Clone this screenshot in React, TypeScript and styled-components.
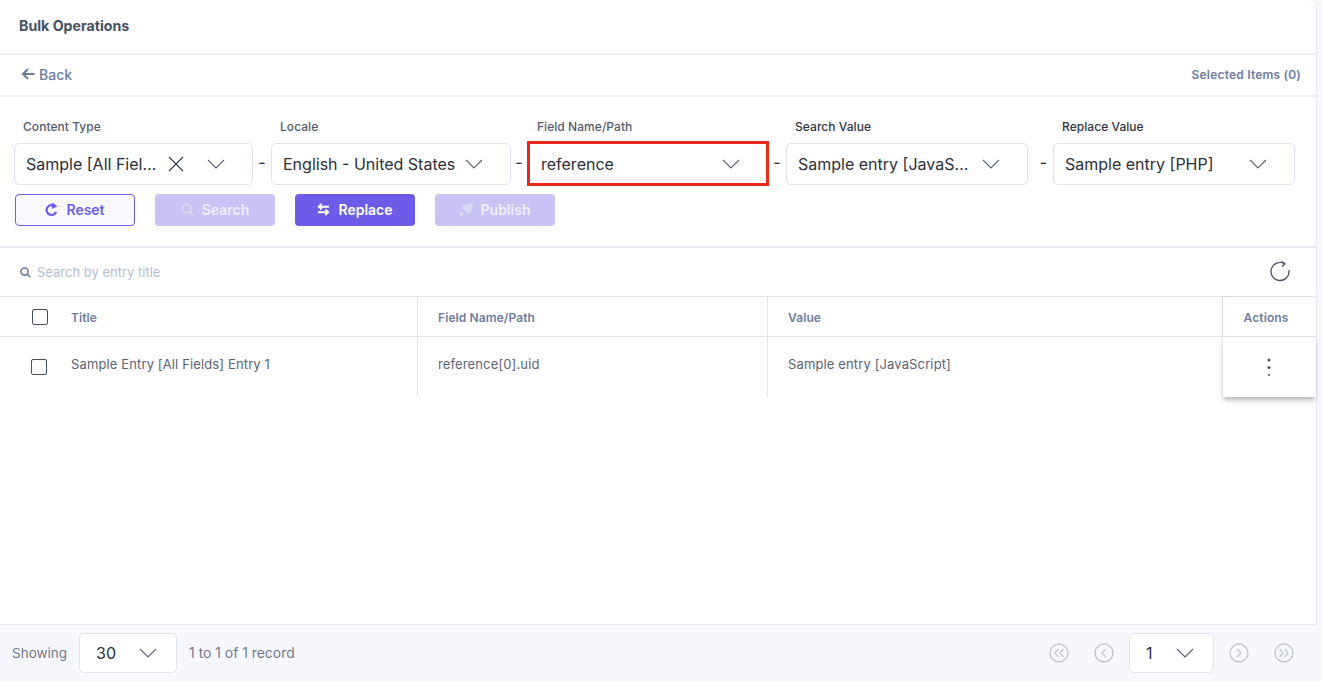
import React from "react";
import styled, { createGlobalStyle } from "styled-components";

const Global = createGlobalStyle`
  html, body { margin: 0; padding: 0; height: 100%; background: #f7f8fd; }
  body { font-family: Inter, "Liberation Sans", sans-serif; overflow: hidden; }
  * { box-sizing: border-box; }
`;

const Page = styled.div`
  width: 1322px;
  height: 681px;
  display: flex;
  flex-direction: column;
  background: #f7f8fd;
`;

const Panel = styled.main`
  width: 1317px;
  height: 624px;
  flex: none;
  background: #fff;
  border-right: 1px solid #e6e9f3;
  border-top-right-radius: 8px;
  display: flex;
  flex-direction: column;
`;

const Header = styled.header`
  height: 55px;
  flex: none;
  display: flex;
  align-items: center;
  padding: 0 19px 2px;
  border-bottom: 2px solid #edeff7;
`;

const Title = styled.h1`
  margin: 0;
  font-size: 14.2px;
  font-weight: 700;
  color: #475161;
`;

const BackBar = styled.div`
  height: 42px;
  flex: none;
  display: flex;
  align-items: center;
  justify-content: space-between;
  padding: 0 15px 2px 21px;
  border-bottom: 2px solid #edeff7;
`;

const BackLink = styled.a`
  display: flex;
  align-items: center;
  gap: 4px;
  font-size: 14px;
  font-weight: 500;
  color: #6c7c9f;
`;

const Selected = styled.span`
  font-size: 12px;
  font-weight: 600;
  letter-spacing: 0.2px;
  color: #6c7c9f;
`;

const Filters = styled.section`
  height: 151px;
  flex: none;
  padding: 23px 0 0 14px;
  border-bottom: 2px solid #e8ebf4;
`;

const FieldRow = styled.div`
  display: flex;
  align-items: flex-end;
`;

const Field = styled.div<{ $w: number; $labelLeft: number }>`
  width: ${(p) => p.$w}px;
  flex: none;
  position: relative;
  & > label {
    padding-left: ${(p) => p.$labelLeft}px;
  }
`;

const Label = styled.label<{ $dark?: boolean }>`
  display: block;
  height: 23px;
  line-height: 14px;
  font-size: 12px;
  font-weight: 500;
  letter-spacing: 0.05px;
  color: ${(p) => (p.$dark ? "#2f3542" : "#535b6b")};
`;

const SelectBox = styled.div<{ $h?: number; $pr?: number; $pl?: number; $w?: number }>`
  height: ${(p) => p.$h ?? 42}px;
  ${(p) => (p.$w ? `width: ${p.$w}px; flex: none;` : "")}
  display: flex;
  align-items: center;
  padding: 0 ${(p) => p.$pr ?? 27}px 0 ${(p) => p.$pl ?? 11}px;
  background: #fff;
  border: 1px solid #dfe3f0;
  border-radius: 5px;
  color: #2b2f38;
  font-size: 16px;
`;

const SelectValue = styled.span<{ $max?: number }>`
  flex: 0 1 auto;
  min-width: 0;
  ${(p) => (p.$max ? `max-width: ${p.$max}px;` : "")}
  white-space: nowrap;
  overflow: hidden;
  text-overflow: ellipsis;
`;

const ClearIcon = styled.svg`
  flex: none;
  width: 18px;
  height: 18px;
  margin-left: 10px;
`;

const Chevron = styled.svg`
  flex: none;
  width: 18px;
  height: 10px;
  margin-left: auto;
`;

const Dash = styled.span<{ $w: number; $shift?: number }>`
  width: ${(p) => p.$w}px;
  flex: none;
  height: 42px;
  padding-left: ${(p) => p.$shift ?? 0}px;
  line-height: 38px;
  text-align: center;
  font-size: 16px;
  color: #2b2f38;
`;

const Highlight = styled.div`
  position: absolute;
  left: 0;
  right: -1px;
  top: 21px;
  height: 45px;
  border: 3px solid #e8291e;
  pointer-events: none;
`;

const ButtonRow = styled.div`
  display: flex;
  gap: 20px;
  margin: 9px 0 0 1px;
`;

const Button = styled.button<{ $variant: "outline" | "solid" | "muted" }>`
  width: 120px;
  height: 32px;
  display: flex;
  align-items: center;
  justify-content: center;
  gap: 8px;
  padding: 0 0 1px;
  font: 600 14px Inter, "Liberation Sans", sans-serif;
  border-radius: 4px;
  border: 1px solid ${(p) => (p.$variant === "outline" ? "#6c5ce7" : "transparent")};
  background: ${(p) =>
    p.$variant === "outline" ? "#f9f8ff" : p.$variant === "solid" ? "#6c5ce7" : "#c9c2f4"};
  color: ${(p) => (p.$variant === "outline" ? "#6c5ce7" : p.$variant === "solid" ? "#fff" : "#f1effd")};
`;

const SearchBar = styled.div`
  height: 49px;
  flex: none;
  display: flex;
  align-items: center;
  justify-content: space-between;
  padding: 0 26px 0 20px;
  border-bottom: 1px solid #e0e4ef;
`;

const SearchField = styled.div`
  display: flex;
  align-items: center;
  gap: 6px;
  font-size: 13px;
  color: #b3bcd1;
`;

const Grid = styled.div`
  display: grid;
  grid-template-columns: 418px 350px 455px 93px;
`;

const HeadCell = styled.div<{ $last?: boolean }>`
  height: 40px;
  display: flex;
  align-items: center;
  padding: 1px 0 0 20px;
  font-size: 12px;
  font-weight: 600;
  letter-spacing: 0.1px;
  color: #6c7c9f;
  border-bottom: 1px solid #e0e4ef;
  border-right: ${(p) => (p.$last ? "none" : "1px solid #e0e4ef")};
`;

const BodyCell = styled.div<{ $last?: boolean }>`
  height: 60px;
  padding: 19px 0 0 20px;
  font-size: 13px;
  line-height: 16px;
  letter-spacing: 0.13px;
  color: #5c6473;
  border-right: ${(p) => (p.$last ? "none" : "1px solid #e0e4ef")};
`;

const TitleHead = styled(HeadCell)`
  padding-left: 32px;
  gap: 23px;
`;

const TitleBody = styled(BodyCell)`
  display: flex;
  align-items: flex-start;
  padding-left: 31px;
  gap: 24px;
`;

const Check = styled.span<{ $top?: number }>`
  width: 16px;
  height: 16px;
  flex: none;
  margin-top: ${(p) => p.$top ?? 0}px;
  border: 1.3px solid #475161;
  border-radius: 2px;
  background: #fff;
`;

const ActionsHead = styled(HeadCell)`
  justify-content: center;
  padding: 1px 7px 0 0;
  box-shadow: -1px 0 2px rgba(110, 120, 140, 0.14);
  position: relative;
`;

const ActionsBody = styled(BodyCell)`
  display: flex;
  align-items: flex-start;
  justify-content: center;
  padding: 21px 1px 0 0;
  box-shadow: 0 4px 5px -1px rgba(80, 82, 92, 0.42), -1px 0 2px rgba(110, 120, 140, 0.08);
  position: relative;
`;

const Footer = styled.footer`
  height: 57px;
  flex: none;
  display: flex;
  align-items: center;
  justify-content: space-between;
  padding: 0 22px 0 12px;
  border-top: 1px solid #e2e5f0;
  width: 1316px;
`;

const FooterGroup = styled.div`
  display: flex;
  align-items: center;
  font-size: 14px;
  color: #73788a;
`;

const ShowingLabel = styled.span`
  margin: 0 12px 1px 0;
  font-size: 13.5px;
`;

const RecordCount = styled.span`
  margin: 0 0 1px 12px;
  font-size: 13.9px;
`;

const PagerIcon = styled.svg<{ $left?: number; $right?: number }>`
  flex: none;
  width: 20px;
  height: 20px;
  margin-left: ${(p) => p.$left ?? 0}px;
  margin-right: ${(p) => p.$right ?? 0}px;
`;

const ChevronDown = () => (
  <Chevron viewBox="0 0 18 10" fill="none" stroke="#5f6676" strokeWidth="1.2">
    <path d="M1 1l8 8 8-8" />
  </Chevron>
);

const Select = ({ value, clear, max, pl }: { value: string; clear?: boolean; max?: number; pl?: number }) => (
  <SelectBox $pl={pl}>
    <SelectValue $max={max}>{value}</SelectValue>
    {clear && (
      <ClearIcon viewBox="0 0 18 18" fill="none" stroke="#3d424d" strokeWidth="1.3">
        <path d="M2 2l14 14M16 2L2 16" />
      </ClearIcon>
    )}
    <ChevronDown />
  </SelectBox>
);

const Pager = ({ d, left, right }: { d: string; left?: number; right?: number }) => (
  <PagerIcon viewBox="0 0 20 20" fill="none" stroke="#c3c6d0" strokeWidth="1.4" $left={left} $right={right}>
    <circle cx="10" cy="10" r="9" />
    <path d={d} strokeLinecap="round" strokeLinejoin="round" />
  </PagerIcon>
);

export default function App() {
  return (
    <Page>
      <Global />
      <Panel>
        <Header>
          <Title>Bulk Operations</Title>
        </Header>
        <BackBar>
          <BackLink>
            <svg width="14" height="14" viewBox="0 0 14 14" fill="none" stroke="#6c7c9f" strokeWidth="2">
              <path d="M13.5 7H2M7 2L2 7l5 5" />
            </svg>
            Back
          </BackLink>
          <Selected>Selected Items (0)</Selected>
        </BackBar>
        <Filters>
          <FieldRow>
            <Field $w={239} $labelLeft={9}>
              <Label>Content Type</Label>
              <Select value="Sample [All Fields] Entry" clear max={131} />
            </Field>
            <Dash $w={18}>-</Dash>
            <Field $w={240} $labelLeft={9}>
              <Label>Locale</Label>
              <Select value="English - United States" />
            </Field>
            <Dash $w={16}>-</Dash>
            <Field $w={241} $labelLeft={10}>
              <Label>Field Name/Path</Label>
              <Select value="reference" pl={13} />
              <Highlight />
            </Field>
            <Dash $w={18}>-</Dash>
            <Field $w={242} $labelLeft={9}>
              <Label $dark>Search Value</Label>
              <Select value="Sample entry [JavaScript]" max={172} />
            </Field>
            <Dash $w={25} $shift={6}>-</Dash>
            <Field $w={242} $labelLeft={9}>
              <Label $dark>Replace Value</Label>
              <Select value="Sample entry [PHP]" />
            </Field>
          </FieldRow>
          <ButtonRow>
            <Button $variant="outline">
              <svg width="13" height="13" viewBox="0 0 14 14" fill="none" stroke="#6c5ce7" strokeWidth="2.4">
                <path d="M12 9.500A5.300 5.300 0 1 1 7.500 2.300" />
                <path d="M7.500 -0.500L13.500 3.500 7.500 6.500z" fill="#6c5ce7" stroke="none" />
              </svg>
              Reset
            </Button>
            <Button $variant="muted">
              <svg width="13" height="13" viewBox="0 0 14 14" fill="none" stroke="#dcdbf0" strokeWidth="1.8">
                <circle cx="6" cy="6" r="4.600" />
                <path d="M9.500 9.500L13 13" />
              </svg>
              Search
            </Button>
            <Button $variant="solid">
              <svg width="13" height="13" viewBox="0 0 14 14" fill="none" stroke="#fff" strokeWidth="2">
                <path d="M13 4H2M5 1L2 4l3 3M1 10h11M9 7l3 3-3 3" />
              </svg>
              Replace
            </Button>
            <Button $variant="muted">
              <svg width="13" height="13" viewBox="0 0 14 14" fill="#d9dcf0">
                <path d="M13.800.2C10 .2 6 1 4 3L1.500 5.500l2 1 4 4 1 2L11 10c2-2 2.800-6 2.800-9.800z" />
                <path d="M0 10h3v4H0z" />
              </svg>
              Publish
            </Button>
          </ButtonRow>
        </Filters>
        <SearchBar>
          <SearchField>
            <svg width="11" height="11" viewBox="0 0 12 12" fill="none" stroke="#6c7c9f" strokeWidth="1.8">
              <circle cx="5" cy="5" r="3.900" />
              <path d="M8 8l3.200 3.200" />
            </svg>
            Search by entry title
          </SearchField>
          <svg width="20" height="22" viewBox="0 -2 20 22" fill="none" stroke="#4a5160" strokeWidth="1.300">
            <path d="M18.900 7A9 9 0 1 1 14.500 .7" />
            <path d="M11.700 -1.500L15 .8 12 3.500" />
          </svg>
        </SearchBar>
        <Grid>
          <TitleHead>
            <Check />
            Title
          </TitleHead>
          <HeadCell>Field Name/Path</HeadCell>
          <HeadCell>Value</HeadCell>
          <ActionsHead $last>Actions</ActionsHead>
          <TitleBody>
            <Check $top={3} />
            <span>Sample Entry [All Fields] Entry 1</span>
          </TitleBody>
          <BodyCell>reference[0].uid</BodyCell>
          <BodyCell $last>Sample entry [JavaScript]</BodyCell>
          <ActionsBody $last>
            <svg width="4" height="18" viewBox="0 0 4 18" fill="#49505e">
              <circle cx="2" cy="2" r="1.500" />
              <circle cx="2" cy="9.500" r="1.500" />
              <circle cx="2" cy="17" r="1" />
            </svg>
          </ActionsBody>
        </Grid>
      </Panel>
      <Footer>
        <FooterGroup>
          <ShowingLabel>Showing</ShowingLabel>
          <SelectBox $h={40} $w={98} $pl={16} $pr={19}>
            <SelectValue>30</SelectValue>
            <ChevronDown />
          </SelectBox>
          <RecordCount>1 to 1 of 1 record</RecordCount>
        </FooterGroup>
        <FooterGroup>
          <Pager d="M9 6.500L6 10l3 3.500M14 6.500L11 10l3 3.500" right={25} />
          <Pager d="M11.500 6.500L8 10l3.500 3.500" right={15} />
          <SelectBox $h={40} $w={85} $pl={16} $pr={19}>
            <SelectValue>1</SelectValue>
            <ChevronDown />
          </SelectBox>
          <Pager d="M8.500 6.500L12 10l-3.500 3.500" left={15} />
          <Pager d="M6 6.500L9 10l-3 3.500M11 6.500L14 10l-3 3.500" left={25} />
        </FooterGroup>
      </Footer>
    </Page>
  );
}
